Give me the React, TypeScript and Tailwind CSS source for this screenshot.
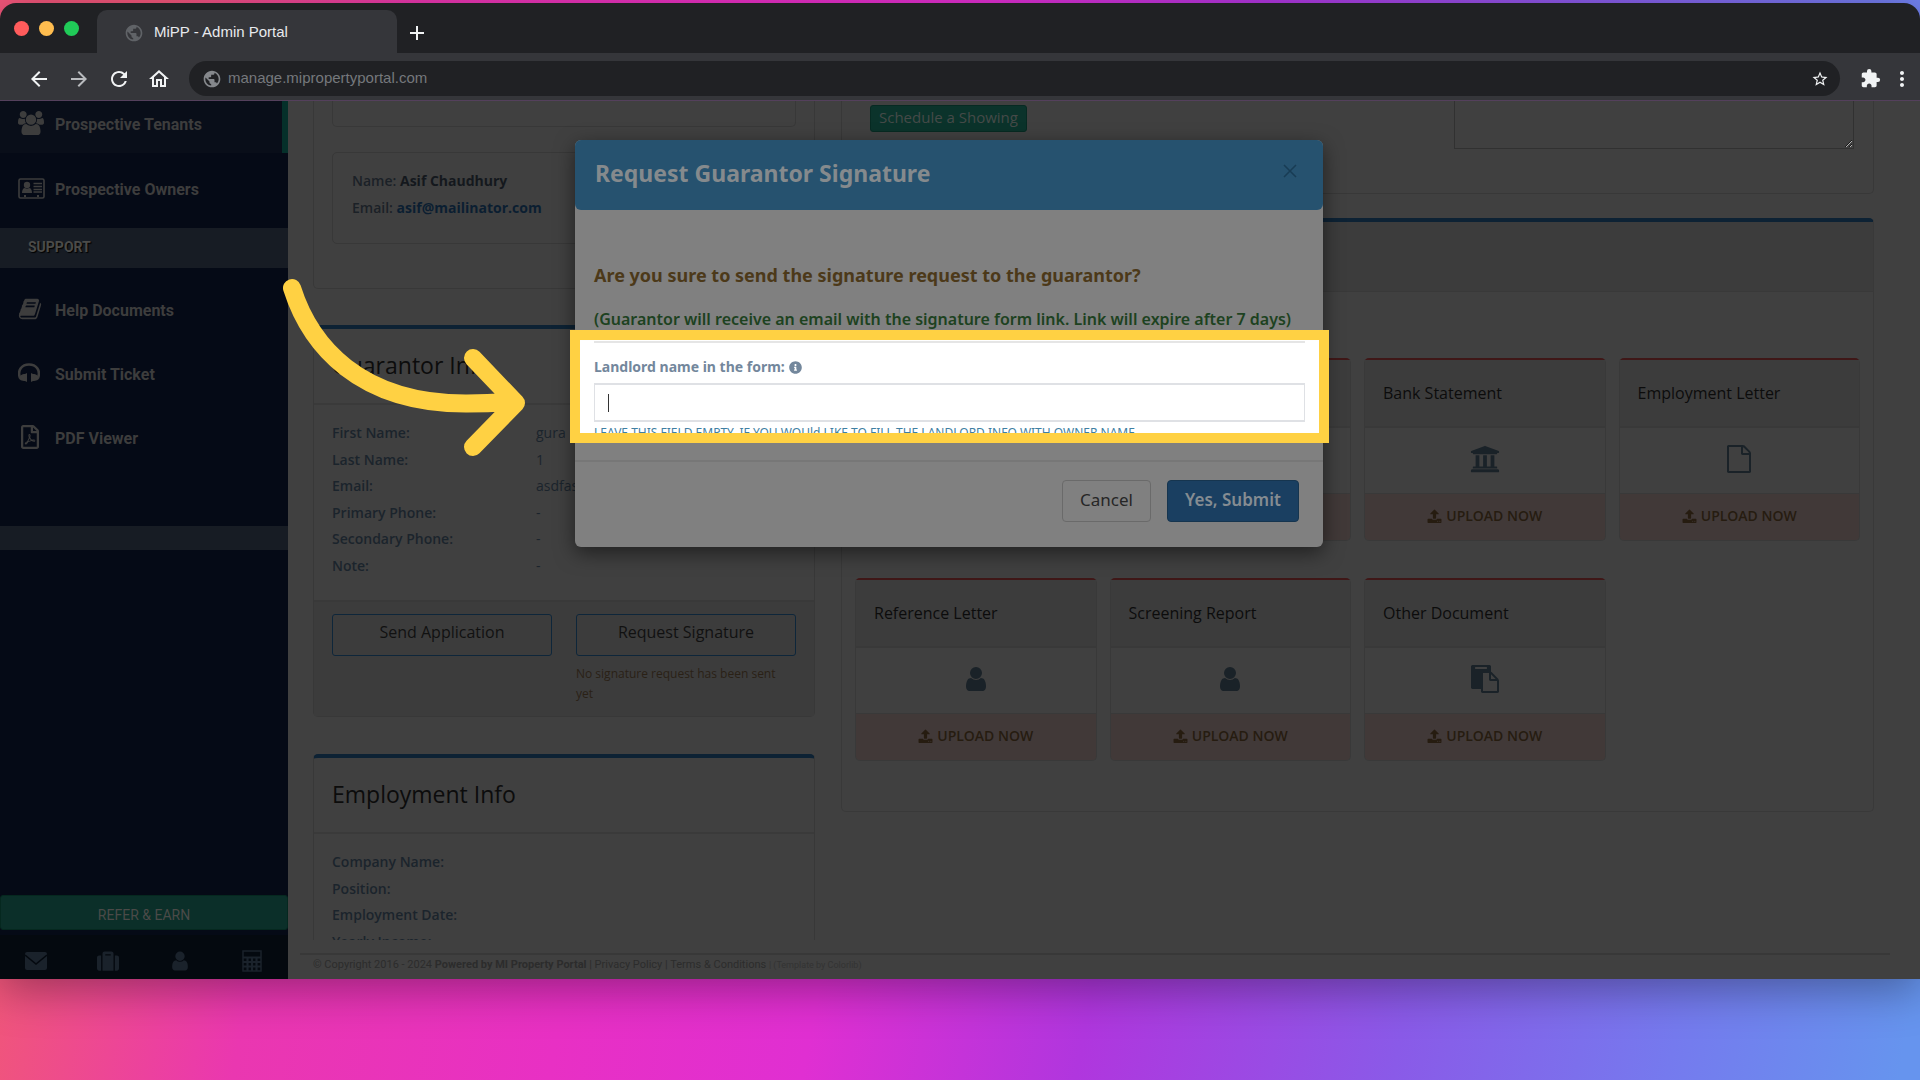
import type { ReactNode } from 'react';
import { FaInfoCircle, FaRegFilePdf, FaSuitcase, FaUniversity } from 'react-icons/fa';
import { MdArrowBack, MdArrowForward, MdExtension, MdMoreVert, MdOutlineHome, MdPublic, MdRefresh, MdStarOutline } from 'react-icons/md';

type GlyphProps = { d: string; box?: string; className?: string };

const Glyph = ({ d, box = '0 0 1792 1792', className }: GlyphProps) => (
  <svg viewBox={box} fill="currentColor" className={className} aria-hidden="true">
    <path d={d} />
  </svg>
);

const USER =
  'M1536 1399q0 109-62.5 187t-150.5 78h-854q-88 0-150.5-78t-62.5-187q0-85 8.5-160.5t31.5-152 58.5-131 94-89 134.5-34.5q131 128 313 128t313-128q76 0 134.5 34.5t94 89 58.5 131 31.5 152 8.5 160.5zm-256-887q0 159-112.5 271.5t-271.5 112.5-271.5-112.5-112.5-271.5 112.5-271.5 271.5-112.5 271.5 112.5 112.5 271.5z';
const UPLOAD =
  'M1344 1472q0-26-19-45t-45-19-45 19-19 45 19 45 45 19 45-19 19-45zm256 0q0-26-19-45t-45-19-45 19-19 45 19 45 45 19 45-19 19-45zm128-224v320q0 40-28 68t-68 28h-1472q-40 0-68-28t-28-68v-320q0-40 28-68t68-28h427q21 56 70.5 92t110.5 36h256q61 0 110.5-36t70.5-92h427q40 0 68 28t28 68zm-325-648q-17 40-59 40h-256v448q0 26-19 45t-45 19h-256q-26 0-45-19t-19-45v-448h-256q-42 0-59-40-17-39 14-69l448-448q18-19 45-19t45 19l448 448q31 30 14 69z';
const USERS =
  'M593 896q-162 5-265 128h-134q-82 0-138-40.5t-56-118.5q0-353 124-353 6 0 43.5 21t97.5 42.5 119 21.5q67 0 133-23-5 37-5 66 0 139 81 256zm1071 637q0 120-73 189.5t-194 69.5h-874q-121 0-194-69.5t-73-189.5q0-53 3.5-103.5t14-109 26.5-108.5 43-97.5 62-81 85.5-53.5 111.5-20q10 0 43 21.5t73 48 107 48 135 21.5 135-21.5 107-48 73-48 43-21.5q61 0 111.5 20t85.5 53.5 62 81 43 97.5 26.5 108.5 14 109 3.5 103.5zm-1024-1277q0 106-75 181t-181 75-181-75-75-181 75-181 181-75 181 75 75 181zm704 384q0 159-112.5 271.5t-271.5 112.5-271.5-112.5-112.5-271.5 112.5-271.5 271.5-112.5 271.5 112.5 112.5 271.5zm576 225q0 78-56 118.5t-138 40.5h-134q-103-123-265-128 81-117 81-256 0-29-5-66 66 23 133 23 59 0 119-21.5t97.5-42.5 43.5-21q124 0 124 353zm-128-609q0 106-75 181t-181 75-181-75-75-181 75-181 181-75 181 75 75 181z';
const BOOK =
  'M1703 478q40 57 18 129l-275 906q-19 64-76.5 107.5t-122.5 43.5h-923q-77 0-148.5-53.5t-99.5-131.5q-24-67-2-127 0-4 3-27t4-37q1-8-3-21.5t-3-19.5q2-11 8-21t16.5-23.5 16.5-23.5q23-38 45-91.5t30-91.5q3-10 .5-30t-.5-28q3-11 17-28t17-23q21-36 42-92t25-90q1-9-2.5-32t.5-28q4-13 22-30.5t22-22.5q19-26 42.5-84.5t27.5-96.5q1-8-3-25.5t-2-26.5q2-8 9-18t18-23 17-21q8-12 16.5-30.5t15-35 16-36 19.5-32 26.5-23.5 36-11.5 47.5 5.5l-1 3q38-9 51-9h761q74 0 114 56t18 130l-274 906q-36 119-71.5 153.5t-128.5 34.5h-869q-27 0-38 15-11 16-1 43 24 70 144 70h923q29 0 56-15.5t35-41.5l300-987q7-22 5-57 38 15 59 43zm-1064 2q-4 13 2 22.5t20 9.5h608q13 0 25.5-9.5t16.5-22.5l21-64q4-13-2-22.5t-20-9.5h-608q-13 0-25.5 9.5t-16.5 22.5zm-83 256q-4 13 2 22.5t20 9.5h608q13 0 25.5-9.5t16.5-22.5l21-64q4-13-2-22.5t-20-9.5h-608q-13 0-25.5 9.5t-16.5 22.5z';
const PASTE =
  'M768 1664h896v-640h-416q-40 0-68-28t-28-68v-416h-384v1152zm256-1440v-64q0-13-9.5-22.5t-22.5-9.5h-704q-13 0-22.5 9.5t-9.5 22.5v64q0 13 9.5 22.5t22.5 9.5h704q13 0 22.5-9.5t9.5-22.5zm256 672h299l-299-299v299zm512 128v672q0 40-28 68t-68 28h-960q-40 0-68-28t-28-68v-160h-544q-40 0-68-28t-28-68v-1344q0-40 28-68t68-28h1088q40 0 68 28t28 68v328q21 13 36 28l408 408q28 28 48 76t20 88z';
const FILE =
  'M1596 380q28 28 48 76t20 88v1152q0 40-28 68t-68 28h-1344q-40 0-68-28t-28-68v-1600q0-40 28-68t68-28h896q40 0 88 20t76 48zm-444-244v376h376q-10-29-22-41l-313-313q-12-12-41-22zm384 1528v-1024h-416q-40 0-68-28t-28-68v-416h-768v1536h1280z';

const Headphones = () => (
  <svg viewBox="0 0 22 20" className="w-[22px]" aria-hidden="true">
    <path d="M2 15C-1 7 4 1.500 11 1.500S23 7 20 15" fill="none" stroke="currentColor" strokeWidth="2.600" />
    <path d="M9 10v9l-2-1c-3 0-6-1-6-3s3-4 6-4zM13 10v9l2-1c3 0 6-1 6-3s-3-4-6-4z" fill="currentColor" />
  </svg>
);

const IdCard = () => (
  <svg viewBox="0 0 27 21" className="w-[27px]" aria-hidden="true">
    <rect x="1" y="1" width="25" height="19" rx="1.500" fill="none" stroke="currentColor" strokeWidth="1.600" />
    <circle cx="9" cy="7" r="3.200" fill="currentColor" />
    <path d="M4 15c0-3 1-5 3-5q2 1.500 4 0c2 0 3 2 3 5zM6 17h2v2H6zM19 17h2v2h-2z" fill="currentColor" />
    <path d="M15.500 5.500H24M15.500 8.500H24M15.500 11.500H24M15.500 14H24" stroke="currentColor" strokeWidth="1.300" />
  </svg>
);

const Calculator = () => (
  <svg viewBox="0 0 20 22" className="h-[22px]" fill="none" stroke="currentColor" aria-hidden="true">
    <rect x="1" y="1" width="18" height="20" strokeWidth="1.500" />
    <path d="M1 7.500h18M1 12h18M1 16.500h18M5.500 8v13M10 8v13M14.500 8v13" strokeWidth="2.200" />
  </svg>
);

const BrowserBar = () => {
  return (
    <header className="rounded-t-2xl bg-[#202124] font-['Liberation_Sans',sans-serif]">
      <div className="flex h-[50px] items-end">
        <div className="flex w-[97px] gap-[10px] self-center pl-[14px]">
          <span className="size-[15px] rounded-full bg-[#ff5c5c]" />
          <span className="size-[15px] rounded-full bg-[#ffbd4f]" />
          <span className="size-[15px] rounded-full bg-[#20cb58]" />
        </div>
        <div className="flex h-[43px] w-[300px] items-center gap-2.5 rounded-t-[10px] bg-[#35363a] pt-0.5 pl-[27px] text-[#e8eaed]">
          <MdPublic className="size-5 text-[#606367]" />
          <span className="text-[15px]">MiPP - Admin Portal</span>
        </div>
        <button className="flex h-[43px] w-10 items-center justify-center pt-0.5" aria-label="New tab">
          <svg viewBox="0 0 14 14" className="size-[14px]" stroke="#f1f3f4" strokeWidth="2">
            <path d="M7 0v14M0 7h14" />
          </svg>
        </button>
      </div>
      <div className="flex h-12 items-center border-b border-[#54405c] bg-[#35363a] pt-1 pl-[27px] text-[#f1f3f4]">
        <div className="flex w-[162px] gap-4">
          <button aria-label="Back"><MdArrowBack className="size-6" /></button>
          <button aria-label="Forward"><MdArrowForward className="size-6 text-[#b9bbbe]" /></button>
          <button aria-label="Reload"><MdRefresh className="size-6" /></button>
          <button aria-label="Home"><MdOutlineHome className="size-6" /></button>
        </div>
        <div className="flex h-[35px] flex-1 items-center gap-1.5 rounded-full bg-[#202124] pr-[11px] pl-[13px]">
          <MdPublic className="size-5 text-[#85888c]" />
          <input aria-label="Address" defaultValue="manage.mipropertyportal.com" className="flex-1 bg-transparent text-[15px] text-[#75787c] outline-none" />
          <button aria-label="Bookmark"><MdStarOutline className="size-[18px]" /></button>
        </div>
        <button aria-label="Extensions" className="ml-5"><MdExtension className="size-[21px]" /></button>
        <button aria-label="Menu" className="mr-1.5 ml-[9px]"><MdMoreVert className="size-6" /></button>
      </div>
    </header>
  );
};

const SideLink = ({ icon, children }: { icon: ReactNode; children: ReactNode }) => (
  <a href="#" className="flex h-16 items-center pl-[18px]">
    <span className="w-[37px] pb-1">{icon}</span>
    {children}
  </a>
);

const Sidebar = () => {
  return (
    <aside className="flex w-[288px] shrink-0 flex-col bg-[#050a16] font-[Roboto] text-base font-bold text-[#3d3d3d]">
      <a href="#" className="flex h-[52px] items-center border-r-[6px] border-[#05302a] bg-[#090e19] pb-1 pl-[18px]">
        <span className="w-[37px] pb-1"><Glyph d={USERS} box="0 0 1920 1792" className="w-[26px]" /></span>
        Prospective Tenants
      </a>
      <div className="h-[75px] pt-[5px]">
        <SideLink icon={<IdCard />}>Prospective Owners</SideLink>
      </div>
      <h2 className="h-10 bg-[#171c24] pl-7 text-sm leading-[38px] font-bold text-[#4b4b49] text-shadow-[1px_1px_1px_#000]">SUPPORT</h2>
      <nav className="h-[258px] pt-[11px]">
        <SideLink icon={<Glyph d={BOOK} className="w-6" />}>Help Documents</SideLink>
        <SideLink icon={<Headphones />}>Submit Ticket</SideLink>
        <SideLink icon={<FaRegFilePdf className="size-6" />}>PDF Viewer</SideLink>
      </nav>
      <div className="h-6 bg-[#171c24]" />
      <div className="flex-1" />
      <button className="h-[35px] rounded-[3px] border border-[#05281f] bg-[#0b2f29] pt-1 text-sm font-normal text-[#4a4a48]">REFER &amp; EARN</button>
      <div className="mt-[5px] grid h-11 grid-cols-4 items-center justify-items-center bg-[#04090f] pt-2 text-[#1a222b]">
        <svg viewBox="0 0 22 18" className="w-[22px]" aria-hidden="true">
          <rect width="22" height="18" rx="2" fill="currentColor" />
          <path d="M0 3l11 9 11-9" fill="none" stroke="#04090f" strokeWidth="1.500" />
        </svg>
        <FaSuitcase className="size-[22px]" />
        <Glyph d={USER} className="w-[22px]" />
        <Calculator />
      </div>
    </aside>
  );
};

const Panel = ({ title, children }: { title: string; children: ReactNode }) => (
  <section className="rounded-[5px] border border-t-4 border-[#383838] border-t-[#0d2234]">
    <h2 className="h-[76px] border-b-2 border-[#3a3a3a] pl-[18px] text-[23px] leading-[73px] text-[#0c0c0c]">{title}</h2>
    {children}
  </section>
);

const guarantor = [
  ['First Name:', 'gura'],
  ['Last Name:', '1'],
  ['Email:', 'asdfas'],
  ['Primary Phone:', '-'],
  ['Secondary Phone:', '-'],
  ['Note:', '-'],
];

const LeftColumn = () => {
  return (
    <div className="w-[502px] shrink-0">
      <section className="h-[188px] rounded-b-[5px] border border-t-0 border-[#383838] px-[18px]">
        <div className="h-[26px] rounded-b-[5px] border border-t-0 border-[#383838]" />
        <div className="mt-[25px] h-[92px] rounded-[5px] border border-[#383838] pt-3.5 pl-[19px] text-sm leading-[27px] font-semibold text-[#1b2127]">
          <p>Name: <span className="font-bold text-[#14181d]">Asif Chaudhury</span></p>
          <p>Email: <a href="#" className="font-bold text-[#0b1e31]">asif@mailinator.com</a></p>
        </div>
      </section>
      <div className="mt-[36px]">
        <Panel title="Guarantor Info">
          <dl className="grid h-[195px] auto-rows-fr pt-[15px] pb-[21px] pl-[18px] text-sm text-[#1b242c]">
            {guarantor.map(([label, value]) => (
              <div key={label} className="flex items-center">
                <dt className="w-[204px] font-semibold">{label}</dt>
                <dd>{value}</dd>
              </div>
            ))}
          </dl>
          <div className="grid h-[116px] grid-cols-2 gap-x-6 border-t-2 border-[#393939] bg-[#3c3c3c] px-[18px] pt-3">
            <button className="h-[42px] rounded-[3px] border border-[#0e263a] pb-1.5 text-base text-[#111]">Send Application</button>
            <div>
              <button className="h-[42px] w-full rounded-[3px] border border-[#0e263a] pb-1.5 text-base text-[#111]">Request Signature</button>
              <p className="mt-2 pr-4 text-xs leading-5 text-[#2a2116]">No signature request has been sent yet</p>
            </div>
          </div>
        </Panel>
      </div>
      <div className="mt-[37px]">
        <Panel title="Employment Info">
          <dl className="grid h-[124px] auto-rows-fr pt-[18px] pl-[18px] text-sm font-semibold text-[#1b242c]">
            <dt>Company Name:</dt>
            <dt>Position:</dt>
            <dt>Employment Date:</dt>
            <dt>Yearly Income:</dt>
          </dl>
        </Panel>
      </div>
    </div>
  );
};

const UploadCard = ({ title, icon }: { title?: string; icon?: ReactNode }) => (
  <article className="rounded-[5px] border border-t-2 border-[#393939] border-t-[#3f1717]">
    <h3 className="h-[68px] border-b-2 border-[#393939] bg-[#3c3c3c] pl-[18px] text-base leading-[66px] font-medium text-[#0c0c0c]">{title}</h3>
    <div className="flex h-[66px] items-center justify-center border-b border-[#393939] pb-1 text-[#1a2228]">{icon}</div>
    <button className="flex h-[46px] w-full items-center justify-center gap-1 rounded-b-[4px] bg-[#413938] pb-0.5 text-sm font-semibold text-[#261c10]">
      <Glyph d={UPLOAD} className="w-[15px]" />
      UPLOAD NOW
    </button>
  </article>
);

const RightColumn = () => {
  return (
    <div className="min-w-0 flex-1">
      <section className="flex h-[93px] justify-between rounded-b-[5px] border border-t-0 border-[#383838] pr-[19px] pl-7">
        <button className="mt-1 h-[27px] rounded-[3px] border border-[#072a22] bg-[#0b332b] px-2 pb-0.5 text-[15px] leading-none text-[#454a48]">Schedule a Showing</button>
        <textarea aria-label="Note" className="h-12 w-[400px] resize border border-t-0 border-[#313131] bg-transparent outline-none" />
      </section>
      <section className="mt-[24px] rounded-[5px] border border-t-4 border-[#393939] border-t-[#0d2234]">
        <div className="h-[70px] border-b border-[#393939] bg-[#3c3c3c]" />
        <div className="grid h-[519px] grid-cols-4 content-start gap-x-[13px] gap-y-[37px] px-[13px] pt-[66px]">
          <UploadCard />
          <UploadCard />
          <UploadCard title="Bank Statement" icon={<FaUniversity className="size-[30px]" />} />
          <UploadCard title="Employment Letter" icon={<Glyph d={FILE} className="w-[28px]" />} />
          <UploadCard title="Reference Letter" icon={<Glyph d={USER} className="w-[28px]" />} />
          <UploadCard title="Screening Report" icon={<Glyph d={USER} className="w-[28px]" />} />
          <UploadCard title="Other Document" icon={<Glyph d={PASTE} className="w-[28px]" />} />
        </div>
      </section>
    </div>
  );
};

const SignatureModal = () => {
  return (
    <div role="dialog" aria-labelledby="modal-title" className="h-[407px] w-[748px] rounded-md bg-[#808080] shadow-[0_6px_20px_rgba(0,0,0,0.5)]">
      <header className="flex h-[70px] items-center justify-between rounded-md bg-[#26526f] pr-[26px] pb-1 pl-5">
        <h1 id="modal-title" className="text-[23px] font-bold text-[#858a8d]">Request Guarantor Signature</h1>
        <button aria-label="Close" className="pb-1">
          <svg viewBox="0 0 14 14" className="size-[14px]" stroke="#183c54" strokeWidth="1.500">
            <path d="M1 1l12 12M13 1L1 13" />
          </svg>
        </button>
      </header>
      <div className="h-[120px] pt-[52px] pl-[19px]">
        <p className="text-lg leading-[26px] font-bold text-[#4c3919]">Are you sure to send the signature request to the guarantor?</p>
        <p className="mt-[19px] text-base leading-6 font-semibold whitespace-nowrap text-[#1d421f]">(Guarantor will receive an email with the signature form link. Link will expire after 7 days)</p>
      </div>
      {/* highlighted field */}
      <div className="relative -mr-1.5 -ml-[5px] h-[113px] overflow-hidden border-[10px] border-[#ffd143] bg-white px-[14px]">
        <hr className="mt-px border-t-2 border-[#e5e5e5]" />
        <label htmlFor="landlord" className="mt-3 flex h-6 items-center gap-1 text-sm font-bold text-[#73879c]">
          Landlord name in the form: <FaInfoCircle className="size-[13px]" />
        </label>
        <div className="mt-1 flex h-[39px] items-center border border-y-2 border-[#dfe1e5] pl-[13px]">
          <span className="h-[18px] w-px bg-[#333]" />
          <input id="landlord" className="h-6 flex-1 text-sm outline-none" />
        </div>
        <p className="text-xs leading-[22px] whitespace-nowrap text-[#3f7fa3]">LEAVE THIS FIELD EMPTY, IF YOU WOUld LIKE TO FILL THE LANDLORD INFO WITH OWNER NAME</p>
      </div>
      <footer className="mt-[17px] flex justify-end gap-4 border-t-2 border-[#777] pt-[18px] pr-6 text-[17px]">
        <button className="h-[42px] w-[89px] rounded border border-[#6a6a6a] pb-0.5 text-[#262626]">Cancel</button>
        <button className="h-[42px] w-[132px] rounded border border-[#16354f] bg-[#1a3f61] pb-0.5 font-semibold text-[#858c92]">Yes, Submit</button>
      </footer>
    </div>
  );
};

const App = () => {
  return (
    <div className="min-h-screen bg-[linear-gradient(100deg,#f0567a_8%,#ea37b0_20%,#e830c4_35%,#e02fd2_47%,#b036de_60%,#8a5ae8_75%,#757aee_88%,#6694ee_99%)] pt-[3px]">
      <div className="relative rounded-t-2xl shadow-[0_10px_45px_rgba(0,0,0,0.35)]">
        <BrowserBar />
        <div className="flex h-[878px] bg-[#404040] font-['Open_Sans',sans-serif]">
          <Sidebar />
          <div className="flex min-w-0 flex-1 flex-col">
            <main className="flex h-[839px] gap-[26px] overflow-hidden pr-[46px] pl-[25px]">
              <LeftColumn />
              <RightColumn />
            </main>
            <footer className="mt-[13px] mr-[30px] ml-3 border-t-2 border-[#383838] pl-[13px] font-[Roboto] text-[11px] leading-5 text-[#2c2c2c]">
              © Copyright 2016 - 2024 <b>Powered by MI Property Portal</b> | <a href="#">Privacy Policy</a> | <a href="#">Terms &amp; Conditions</a>{' '}
              <small className="text-[9px] text-[#333]">| (Template by Colorlib)</small>
            </footer>
          </div>
        </div>
        <div className="absolute inset-x-0 top-[137px] flex justify-center pr-[22px]">
          <SignatureModal />
        </div>
        <svg viewBox="0 0 260 190" className="absolute top-[267px] left-[276px] w-[260px]" fill="none" stroke="#ffd143" strokeWidth="18" strokeLinecap="round" strokeLinejoin="round" aria-hidden="true">
          <path d="M16 18C34 75 83 134 191 133.500Q212 133.500 232 132M197 88L240 133L197 177" />
        </svg>
      </div>
    </div>
  );
};

export default App;
